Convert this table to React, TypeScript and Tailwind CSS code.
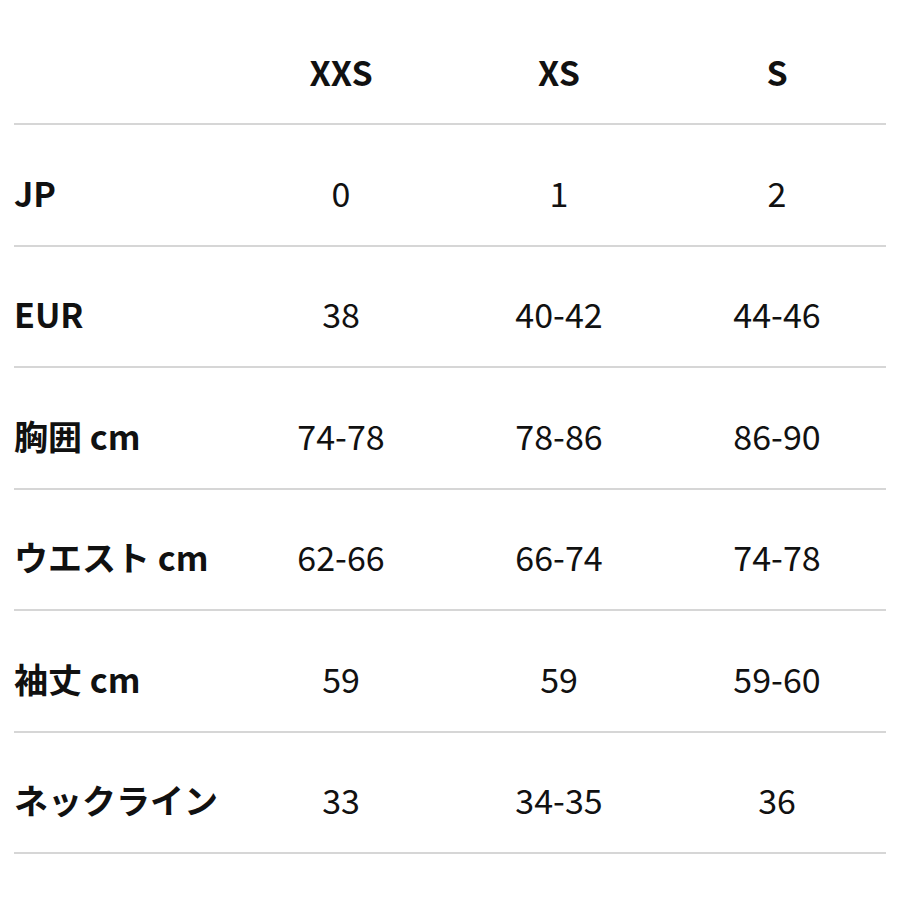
import React from "react";

const header = ["XXS", "XS", "S"];
const rows: [string, string, string, string][] = [
  ["JP", "0", "1", "2"],
  ["EUR", "38", "40-42", "44-46"],
  ["胸囲 cm", "74-78", "78-86", "86-90"],
  ["ウエスト cm", "62-66", "66-74", "74-78"],
  ["袖丈 cm", "59", "59", "59-60"],
  ["ネックライン", "33", "34-35", "36"],
];

export default function App() {
  return (
    <div
      className="w-[900px] h-[900px] bg-white px-[14px] text-[#111111] text-[34px]"
      style={{ fontFamily: '"Noto Sans CJK JP", "Noto Sans", sans-serif' }}
    >
      <div className="grid grid-cols-4 h-[125px] border-b-2 border-[#d6d6d6] items-center pt-[20px] leading-none">
        <div />
        {header.map((h) => (
          <div key={h} className="text-center font-bold">
            {h}
          </div>
        ))}
      </div>
      {rows.map((r) => (
        <div
          key={r[0]}
          className="grid grid-cols-4 h-[121.5px] border-b-2 border-[#d6d6d6] items-center pt-[16px] leading-none"
        >
          <div className="font-bold whitespace-nowrap">{r[0]}</div>
          <div className="text-center">{r[1]}</div>
          <div className="text-center">{r[2]}</div>
          <div className="text-center">{r[3]}</div>
        </div>
      ))}
    </div>
  );
}
